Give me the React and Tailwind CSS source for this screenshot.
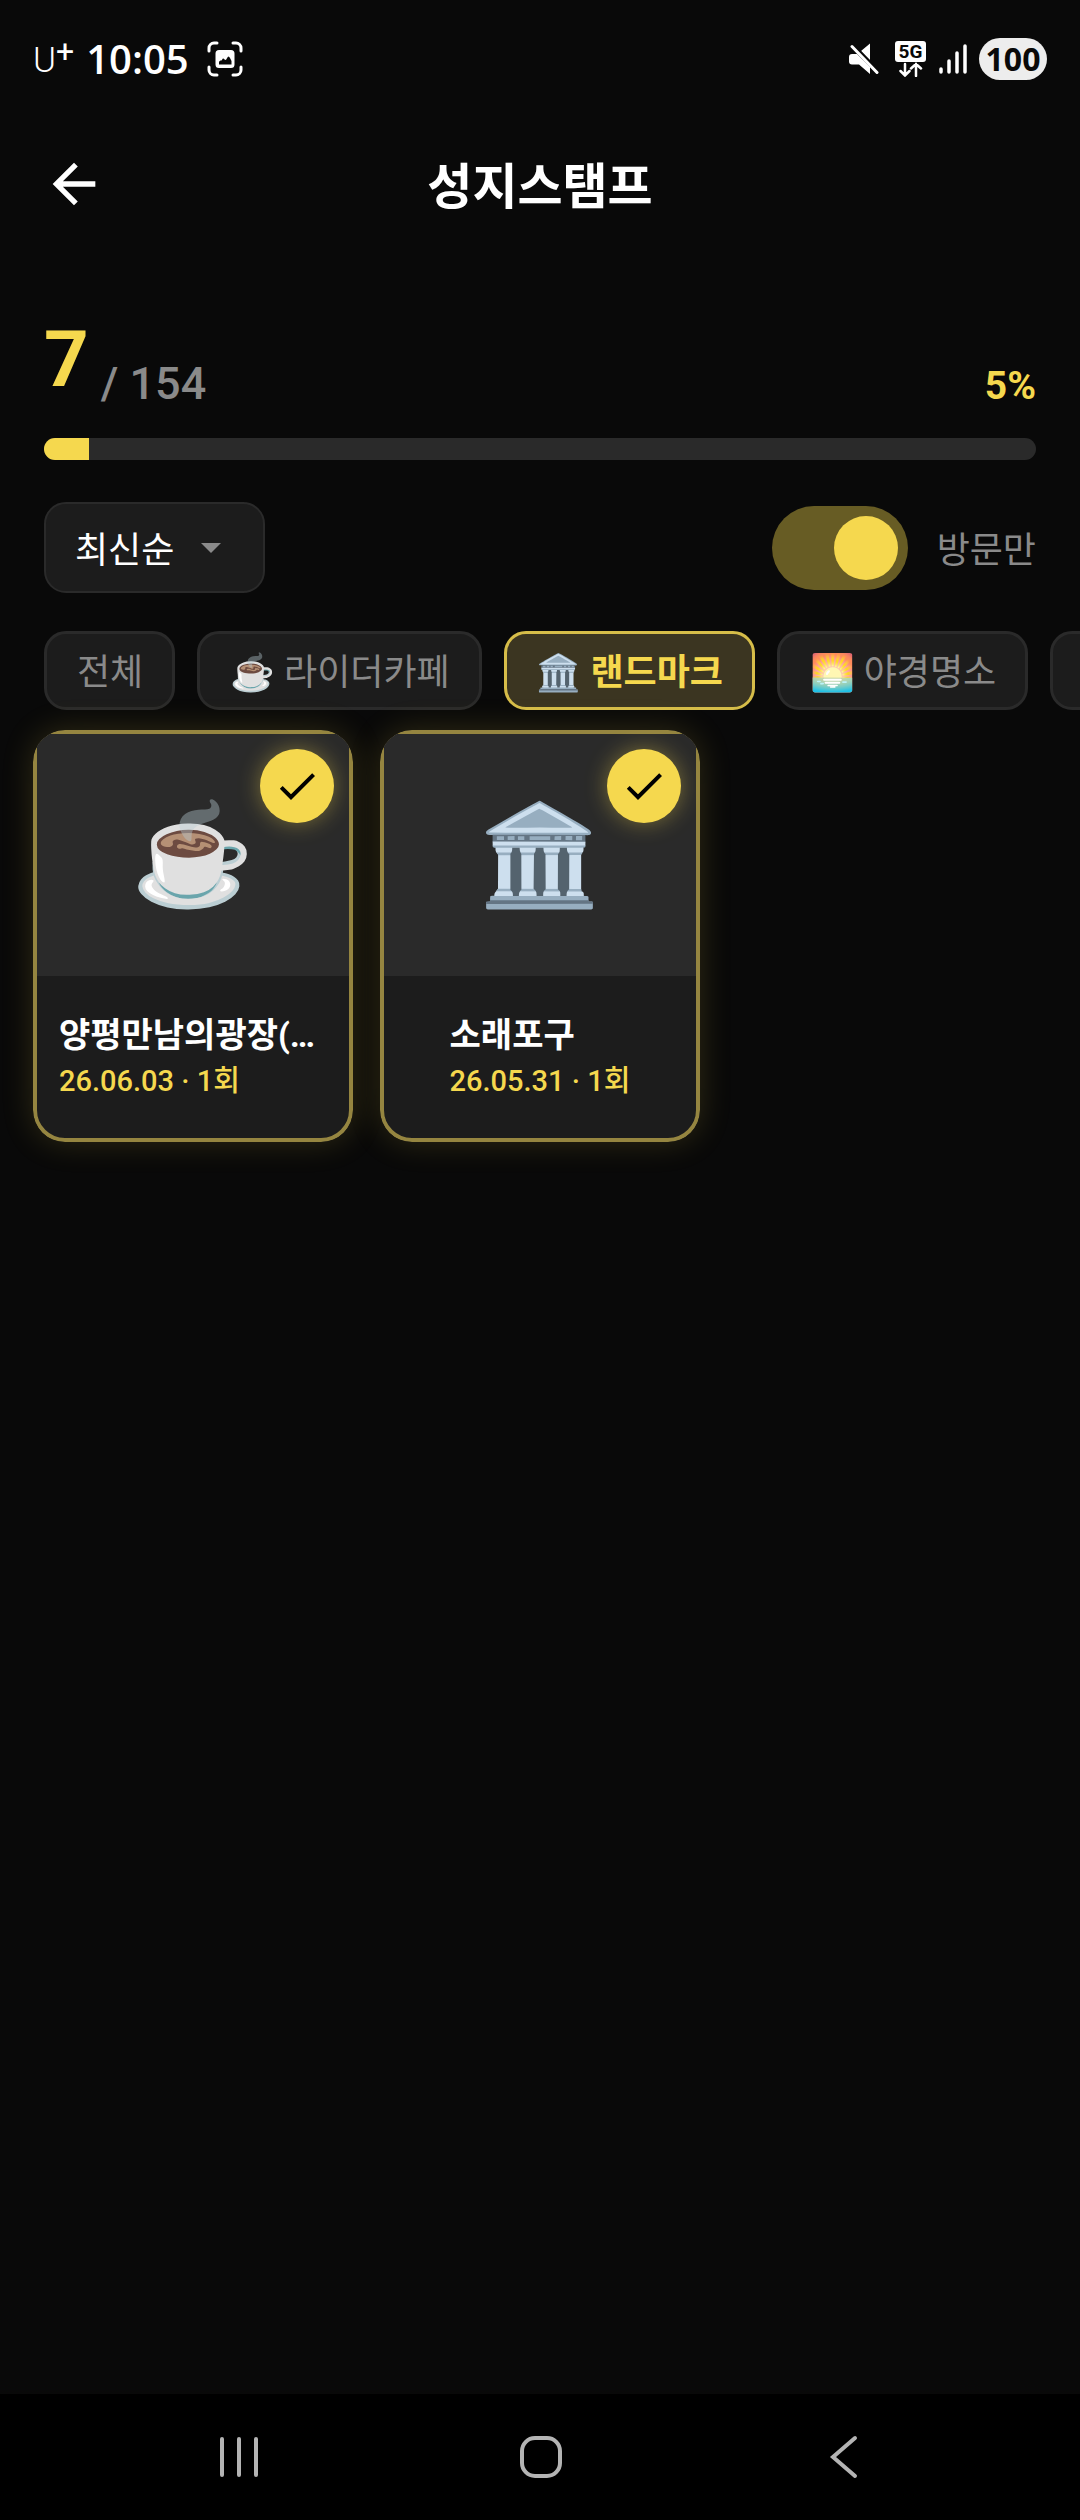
import React, { useState } from 'react'

const categories = [
  { id: 'all', emoji: '', label: '전체' },
  { id: 'cafe', emoji: '☕', label: '라이더카페' },
  { id: 'landmark', emoji: '🏛️', label: '랜드마크' },
  { id: 'night', emoji: '🌅', label: '야경명소' },
]

const stamps = [
  { id: 1, emoji: '☕', name: '양평만남의광장(양평휴게소)', date: '26.06.03', count: 1 },
  { id: 2, emoji: '🏛️', name: '소래포구', date: '26.05.31', count: 1 },
]

const StatusBar = () => {
  return (
    <div className="flex h-[118px] items-center justify-between px-[33px] font-['Open_Sans',sans-serif] text-white">
      <div className="flex items-center">
        <div className="flex items-start pt-1 font-['Roboto',sans-serif]">
          <span className="text-[35px] leading-[40px] font-light">U</span>
          <span className="text-[32px] leading-[20px]">+</span>
        </div>
        <span className="ml-3 text-[40px] leading-[48px] font-semibold">10:05</span>
        <svg className="ml-[18px] h-9 w-9" viewBox="0 0 36 36" fill="none">
          <path d="M2 10V7a5 5 0 0 1 5-5h3M26 2h3a5 5 0 0 1 5 5v3M34 26v3a5 5 0 0 1-5 5h-3M10 34H7a5 5 0 0 1-5-5v-3" stroke="currentColor" strokeWidth="3" strokeLinecap="round" />
          <path fillRule="evenodd" d="M12 9h12a3.500 3.500 0 0 1 3.500 3.500v11a3.500 3.500 0 0 1-3.500 3.500H12a3.500 3.500 0 0 1-3.500-3.500v-11A3.500 3.500 0 0 1 12 9zM12 23.500h12.500v-3.500c-1-2-2-4.500-3-4.500s-2 3.500-3 3.500-1.300-1.500-2.300-1.500-1 2-2 2-2.200.5-2.200 2z" fill="currentColor" />
        </svg>
      </div>
      <div className="flex items-center">
        <svg className="h-8 w-[30px]" viewBox="0 0 30 32" fill="currentColor">
          <path d="M12 8l9-7.500v17zM3 11h5l13 13v7l-11-9.500H3a3 3 0 0 1-3-3V14a3 3 0 0 1 3-3z" />
          <path d="M4 2L30 28" stroke="#090909" strokeWidth="3" />
          <path d="M3 3.500L28 29.500" stroke="currentColor" strokeWidth="3" strokeLinecap="round" />
        </svg>
        <svg className="ml-4 h-9 w-8" viewBox="0 0 32 36" fill="none">
          <rect x="0" y="0" width="31" height="21" rx="3" fill="currentColor" />
          <text x="15.500" y="17" textAnchor="middle" fontSize="19" fontWeight="700" fontFamily="Roboto, sans-serif" fill="#090909">5G</text>
          <path d="M10 23v11M5.500 30l4.500 4.500 4.500-4.500M21 35V23M16 27.500l5-4.500 5 4.500" stroke="currentColor" strokeWidth="2.500" strokeLinecap="round" />
        </svg>
        <svg className="ml-3 h-8 w-[28px]" viewBox="0 0 28 32" stroke="currentColor" strokeWidth="3.500" strokeLinecap="round">
          <path d="M2 26v3M10 18v11M18 10v19M26 3v26" />
        </svg>
        <span className="ml-3 flex h-[42px] w-[68px] items-center justify-center rounded-full bg-[#ededed] text-[32px] leading-[42px] font-bold text-[#090909]">100</span>
      </div>
    </div>
  )
}

const StampCard = ({ stamp }) => {
  return (
    <div className="overflow-hidden rounded-[32px] bg-[#1c1c1c] shadow-[0_0_32px_rgba(245,216,78,0.17)]">
      <div className="rounded-[32px] border-4 border-[#958540]">
        <div className="relative flex h-[242px] items-center justify-center bg-[#2a2a2a]">
          <span className="text-[99px] leading-[120px]">{stamp.emoji}</span>
          <span className="absolute top-[15px] right-[15px] flex h-[74px] w-[74px] items-center justify-center rounded-full bg-[#f5d84e] shadow-[0_0_22px_rgba(245,216,78,0.4)]">
            <svg className="h-12 w-12" viewBox="0 0 24 24" fill="#000">
              <path d="M9 16.170L4.830 12l-1.420 1.410L9 19 21 7l-1.410-1.410z" />
            </svg>
          </span>
        </div>
        <div className="flex h-[162px] items-center justify-center px-[22px]">
          <div className="min-w-0">
            <h2 className="truncate pb-1 text-[34px] leading-[44px] font-bold text-white">{stamp.name}</h2>
            <p className="text-[29px] leading-[40px] font-medium text-[#f5d84e]">{stamp.date} · {stamp.count}회</p>
          </div>
        </div>
      </div>
    </div>
  )
}

const App = () => {
  const [sort, setSort] = useState('recent')
  const [visitedOnly, setVisitedOnly] = useState(true)
  const [category, setCategory] = useState('landmark')
  const percent = Math.round((7 / 154) * 100)

  return (
    <div className="flex min-h-screen flex-col overflow-hidden bg-[#090909] font-['Roboto','Noto_Sans_CJK_KR','Noto_Color_Emoji',sans-serif]">
      <StatusBar />

      <header className="grid h-[132px] grid-cols-[64px_1fr_64px] items-center px-[42px]">
        <button aria-label="뒤로" className="text-white">
          <svg className="h-16 w-16" viewBox="0 0 24 24" fill="currentColor">
            <path d="M20 11H7.830l5.590-5.590L12 4l-8 8 8 8 1.410-1.410L7.830 13H20v-2z" />
          </svg>
        </button>
        <h1 className="pt-2 text-center text-[49px] leading-[72px] font-bold text-white">성지스탬프</h1>
      </header>

      <main className="flex-1">
        <section className="px-11 pt-16">
          <div className="flex items-end justify-between">
            <div className="flex items-end">
              <span className="pb-1 text-[78px] leading-[92px] font-bold text-[#f5d84e]">7</span>
              <span className="ml-3 text-[45px] leading-[52px] font-medium text-[#8a8a8a]">/ 154</span>
            </div>
            <span className="text-[39px] leading-[48px] font-bold text-[#f5d84e]">{percent}%</span>
          </div>
          <div role="progressbar" aria-valuenow={percent} aria-valuemin={0} aria-valuemax={100} className="mt-7 h-[22px] overflow-hidden rounded-full bg-[#2a2a2a]">
            <div className="h-full bg-[#f5d84e]" style={{ width: `${(7 / 154) * 100}%` }}></div>
          </div>

          <div className="mt-[42px] flex items-center justify-between">
            <div className="relative">
              <select
                aria-label="정렬"
                value={sort}
                onChange={(e) => setSort(e.target.value)}
                className="h-[91px] w-[221px] appearance-none rounded-[22px] border-2 border-[#2a2a2a] bg-[#1c1c1c] pt-[6px] pl-[29px] text-[36px] text-white"
              >
                <option value="recent">최신순</option>
              </select>
              <svg className="pointer-events-none absolute top-[41px] right-11 h-[10px] w-5" viewBox="0 0 20 10" fill="#8a8a8a">
                <path d="M0 0h20L10 10z" />
              </svg>
            </div>
            <label className="flex items-center gap-[29px] text-[36px] leading-[52px] text-[#8a8a8a]">
              <input
                type="checkbox"
                role="switch"
                checked={visitedOnly}
                onChange={(e) => setVisitedOnly(e.target.checked)}
                className="flex h-[84px] w-[136px] appearance-none items-center rounded-full bg-[#2a2a2a] px-[10px] before:h-16 before:w-16 before:rounded-full before:bg-[#8a8a8a] checked:justify-end checked:bg-[#675c24] checked:before:bg-[#f5d84e]"
              />
              <span className="pt-[6px]">방문만</span>
            </label>
          </div>
        </section>

        <nav className="mt-[38px] flex gap-[22px] overflow-x-auto pl-11 [scrollbar-width:none]">
          {categories.map((c) => (
            <button
              key={c.id}
              onClick={() => setCategory(c.id)}
              className={`h-[79px] shrink-0 rounded-[22px] border-3 pt-1 pr-[29px] pl-[30px] text-[36px] leading-[52px] whitespace-nowrap ${
                category === c.id
                  ? 'border-[#d6bd49] bg-[#3b3521] font-bold text-[#f5d84e]'
                  : 'border-[#2a2a2a] bg-[#1c1c1c] text-[#8a8a8a]'
              }`}
            >
              {c.emoji} {c.label}
            </button>
          ))}
          <button aria-label="더보기" className="h-[79px] w-[251px] shrink-0 rounded-[22px] border-3 border-[#2a2a2a] bg-[#1c1c1c]"></button>
        </nav>

        <section className="mt-5 grid grid-cols-3 gap-[27px] px-[33px]">
          {stamps.map((s) => (
            <StampCard key={s.id} stamp={s} />
          ))}
        </section>
      </main>

      <footer className="grid h-[126px] grid-cols-3 items-center justify-items-center bg-black pr-[86px] pl-[88px] text-[#b4b4b4]">
        <button aria-label="최근 앱">
          <svg className="h-[42px] w-[42px]" viewBox="0 0 42 42" stroke="currentColor" strokeWidth="4" strokeLinecap="round">
            <path d="M4 3v36M21 3v36M38 3v36" />
          </svg>
        </button>
        <button aria-label="홈">
          <svg className="h-11 w-11" viewBox="0 0 44 44" fill="none" stroke="currentColor" strokeWidth="4">
            <rect x="3" y="3" width="38" height="38" rx="13" />
          </svg>
        </button>
        <button aria-label="이전">
          <svg className="h-11 w-11" viewBox="0 0 44 44" fill="none" stroke="currentColor" strokeWidth="4" strokeLinecap="round">
            <path d="M34 3L12 22l22 19" />
          </svg>
        </button>
      </footer>
    </div>
  )
}

export default App
